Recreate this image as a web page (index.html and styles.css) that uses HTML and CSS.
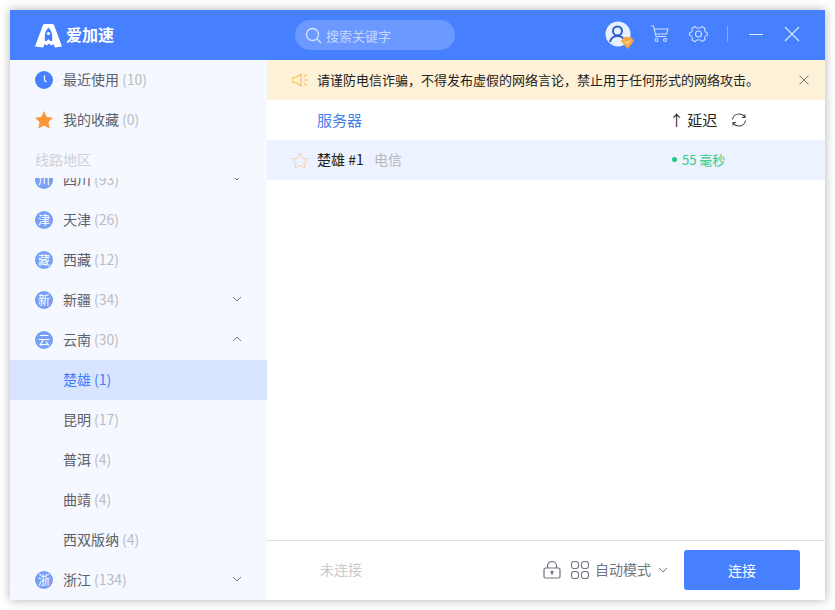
FILE: index.html
```html
<!DOCTYPE html>
<html lang="zh-CN">
<head>
    <meta charset="UTF-8">
    <title>爱加速</title>
    <link rel="stylesheet" href="styles.css">
</head>
<body>
    <div class="window">
        <header class="topbar">
            <div class="logo">
                <svg width="27" height="25" viewBox="0 0 27 25"><path fill="#fff" d="M9.500 1h8c.8 0 1.200.4 1.500 1l8 21.500-7 1-1.800-3.500-2 1.500-2.200-2-2.200 2-2-1.500L8 24.500l-8-1L8 2c.3-.6.700-1 1.500-1z"/><path fill="#4680ff" d="M13.500 4.500c-2.500 2.300-3.700 5.500-3.700 9V18h1.700l2-1.700 2 1.700h1.700v-4.500c0-3.500-1.200-6.700-3.700-9z"/><circle cx="13.500" cy="10.500" r="1.600" fill="#fff"/></svg>
                <span class="logo-text">爱加速</span>
            </div>
            <div class="search">
                <svg width="17" height="17" viewBox="0 0 17 17" fill="none" stroke="#d5e2ff" stroke-width="1.300"><circle cx="7.500" cy="7.500" r="6"/><path d="M12 12l4 4"/></svg>
                <span>搜索关键字</span>
            </div>
            <div class="top-actions">
                <div class="avatar">
                    <svg width="26" height="26" viewBox="0 0 26 26"><circle cx="13" cy="13" r="12.500" fill="#e8f0ff"/><circle cx="12.500" cy="10" r="4.500" fill="none" stroke="#2f5fc8" stroke-width="2"/><path d="M5 21c1-4 4-6 7.500-6s6.500 2 7.500 6" fill="none" stroke="#2f5fc8" stroke-width="2"/></svg>
                    <svg class="badge" width="13" height="13" viewBox="0 0 13 13"><path fill="#f5a742" d="M3 1h7l3 4-6.500 8L0 5z"/><path d="M4 5.500l2 2 3-3" fill="none" stroke="#fff"/></svg>
                </div>
                <svg class="cart" width="19" height="18" viewBox="0 0 19 18" fill="none" stroke="#cfdcfb" stroke-width="1.100"><path d="M1 1h2.500l2.500 10.500h10M4.200 4H18l-1.500 5H5.300"/><circle cx="6.500" cy="15" r="1.500"/><circle cx="15" cy="15" r="1.500"/></svg>
                <svg class="gear" width="19" height="18" viewBox="0 0 19 18" fill="none" stroke="#cfdcfb" stroke-width="1.100"><path d="M6 1.500c.5 1 2 1.800 3.500 1.800S12.500 2.500 13 1.500l3 1.800c-.5 1.200-.3 2.400.4 3.400.5.800 1.300 1.300 2.100 1.300v2c-.8 0-1.600.5-2.100 1.300-.7 1-.9 2.200-.4 3.400l-3 1.800c-.5-1-2-1.800-3.500-1.800S6.500 15.700 6 16.700l-3-1.800c.5-1.200.3-2.400-.4-3.400-.5-.8-1.300-1.300-2.100-1.300V8c.8 0 1.600-.5 2.100-1.300.7-1 .9-2.200.4-3.400z"/><circle cx="9.500" cy="9" r="3"/></svg>
                <span class="divider"></span>
                <span class="minimize"></span>
                <svg class="close" width="16" height="16" viewBox="0 0 16 16" stroke="#dbe6ff" stroke-width="1.100"><path d="M1 1l14 14M15 1L1 15"/></svg>
            </div>
        </header>
        <div class="body">
            <aside class="sidebar">
                <div class="side-row">
                    <span class="clock"><svg width="18" height="18" viewBox="0 0 18 18"><circle cx="9" cy="9" r="9" fill="#4680ff"/><path d="M9.500 4.500v5l2 1.500" fill="none" stroke="#fff" stroke-width="1.200"/></svg></span>
                    <span class="name">最近使用</span><span class="count">(10)</span>
                </div>
                <div class="side-row">
                    <span class="clock"><svg width="18" height="18" viewBox="0 0 18 18"><path fill="#fd9639" d="M9 0l2.800 5.900 6.200.8-4.500 4.400 1.100 6.400L9 14.400l-5.600 3.100 1.100-6.400L0 6.700l6.200-.8z"/></svg></span>
                    <span class="name">我的收藏</span><span class="count">(0)</span>
                </div>
                <div class="side-title">线路地区</div>
                <div class="region-list">
                    <div class="side-row first">
                        <span class="dot">川</span>
                        <span class="name">四川</span><span class="count">(93)</span>
                        <svg class="chev" width="10" height="6" viewBox="0 0 10 6" fill="none" stroke="#777"><path d="M1 1l4 4 4-4"/></svg>
                    </div>
                    <div class="side-row"><span class="dot">津</span><span class="name">天津</span><span class="count">(26)</span></div>
                    <div class="side-row"><span class="dot">藏</span><span class="name">西藏</span><span class="count">(12)</span></div>
                    <div class="side-row">
                        <span class="dot">新</span><span class="name">新疆</span><span class="count">(34)</span>
                        <svg class="chev" width="10" height="6" viewBox="0 0 10 6" fill="none" stroke="#777"><path d="M1 1l4 4 4-4"/></svg>
                    </div>
                    <div class="side-row">
                        <span class="dot">云</span><span class="name">云南</span><span class="count">(30)</span>
                        <svg class="chev" width="10" height="6" viewBox="0 0 10 6" fill="none" stroke="#777"><path d="M1 5l4-4 4 4"/></svg>
                    </div>
                    <div class="side-row sub active"><span class="name">楚雄</span><span class="count">(1)</span></div>
                    <div class="side-row sub"><span class="name">昆明</span><span class="count">(17)</span></div>
                    <div class="side-row sub"><span class="name">普洱</span><span class="count">(4)</span></div>
                    <div class="side-row sub"><span class="name">曲靖</span><span class="count">(4)</span></div>
                    <div class="side-row sub"><span class="name">西双版纳</span><span class="count">(4)</span></div>
                    <div class="side-row">
                        <span class="dot">浙</span><span class="name">浙江</span><span class="count">(134)</span>
                        <svg class="chev" width="10" height="6" viewBox="0 0 10 6" fill="none" stroke="#777"><path d="M1 1l4 4 4-4"/></svg>
                    </div>
                </div>
            </aside>
            <main class="content">
                <div class="notice">
                    <svg width="16" height="14" viewBox="0 0 16 14" fill="none" stroke="#f7c35f" stroke-width="1.100"><path d="M.5 4.500h3.500L9 1v12L4 9.500H.5zM12 3.500l3-2M12 7h3.500M12 10.500l3 2"/></svg>
                    <span class="notice-text">请谨防电信诈骗，不得发布虚假的网络言论，禁止用于任何形式的网络攻击。</span>
                    <svg class="notice-close" width="10" height="10" viewBox="0 0 10 10" stroke="#777"><path d="M.5.500l9 9M9.500.500l-9 9"/></svg>
                </div>
                <div class="list-head">
                    <span class="col-server">服务器</span>
                    <span class="col-delay">↑ 延迟</span>
                    <svg width="16" height="14" viewBox="0 0 16 14" fill="none" stroke="#444" stroke-width="1.100"><path d="M1.500 6.500C2 3 5 1 8 1c2.500 0 4.500 1 5.500 3M14.500 7.500C14 11 11 13 8 13c-2.500 0-4.500-1-5.500-3M11 4.500h3V1.500M5 9.500H2v3"/></svg>
                </div>
                <div class="server-row">
                    <svg width="18" height="17" viewBox="0 0 18 17" fill="none" stroke="#f3cfae"><path d="M9 1l2.400 5.100 5.600.7-4.100 3.800 1.100 5.500L9 13.400l-5 2.700 1.100-5.500L1 6.800l5.600-.7z"/></svg>
                    <span class="server-name">楚雄 #1</span>
                    <span class="server-isp">电信</span>
                    <span class="server-ping"><i class="ping-dot"></i>55 毫秒</span>
                </div>
                <div class="spacer"></div>
                <footer class="bottom">
                    <span class="status">未连接</span>
                    <svg class="lock" width="18" height="18" viewBox="0 0 18 18" fill="none" stroke="#6f7480" stroke-width="1.200"><rect x="1" y="7" width="16" height="10" rx="1.500"/><path d="M4.500 7V5a4.500 4.500 0 0 1 9 0v2"/><circle cx="9" cy="11" r="1" fill="#6f7480"/><path d="M9 11v3"/></svg>
                    <svg class="grid" width="18" height="18" viewBox="0 0 18 18" fill="none" stroke="#6f7480" stroke-width="1.100"><rect x=".5" y=".5" width="7" height="7" rx="2.500"/><rect x="10.500" y=".5" width="7" height="7" rx="2.500"/><rect x=".5" y="10.500" width="7" height="7" rx="2.500"/><rect x="10.500" y="10.500" width="7" height="7" rx="2.500"/></svg>
                    <span class="mode">自动模式</span>
                    <svg class="mode-chev" width="10" height="6" viewBox="0 0 10 6" fill="none" stroke="#777"><path d="M1 1l4 4 4-4"/></svg>
                    <button class="connect">连接</button>
                </footer>
            </main>
        </div>
    </div>
</body>
</html>
```
FILE: styles.css
```css
* {
    box-sizing: border-box;
}
html, body {
    height: 100%;
}
body {
    margin: 0;
    padding: 10px;
    background: #fff;
    font-family: "Noto Sans CJK SC", "Noto Sans", sans-serif;
    font-size: 14px;
    overflow: hidden;
}
.window {
    width: 815px;
    height: 590px;
    display: flex;
    flex-direction: column;
    background: #fff;
    box-shadow: 0 0 10px rgba(0, 0, 0, 0.3);
}
.topbar {
    height: 50px;
    flex: none;
    background: #4680ff;
    display: flex;
    align-items: center;
}
.logo {
    width: 285px;
    padding-left: 25px;
    display: flex;
    align-items: center;
    gap: 4px;
}
.logo-text {
    color: #fff;
    font-size: 16px;
    font-weight: 700;
    line-height: 20px;
    margin-bottom: 2px;
}
.search {
    width: 160px;
    height: 30px;
    border-radius: 15px;
    background: #6b99ff;
    color: #c5d6ff;
    display: flex;
    align-items: center;
    gap: 4px;
    padding-left: 10px;
    font-size: 13px;
}
.top-actions {
    margin-left: auto;
    display: flex;
    align-items: center;
    margin-bottom: 2px;
}
.avatar {
    position: relative;
    width: 26px;
    height: 26px;
    margin-right: 19px;
}
.badge {
    position: absolute;
    right: -3px;
    bottom: -2px;
}
.cart {
    margin-right: 20px;
}
.gear {
    margin-right: 19px;
}
.divider {
    width: 1px;
    height: 16px;
    background: #82a8ff;
    margin-right: 21px;
}
.minimize {
    width: 14px;
    height: 1px;
    background: #dbe6ff;
    margin-right: 21px;
}
.close {
    margin-right: 25px;
}
.body {
    flex: 1;
    display: flex;
    min-height: 0;
}
.sidebar {
    width: 257px;
    flex: none;
    background: #f5f8ff;
    display: flex;
    flex-direction: column;
    overflow: hidden;
}
.side-row {
    height: 40px;
    flex: none;
    display: flex;
    align-items: center;
    padding: 0 25px;
    color: #5c6068;
    font-size: 14px;
    white-space: pre;
}
.side-row .name, .side-row .count {
    margin-bottom: 2px;
}
.clock {
    width: 18px;
    height: 18px;
    margin-right: 10px;
    display: flex;
}
.count {
    color: #b9bcc2;
    margin-left: 3px;
}
.side-title {
    height: 38px;
    flex: none;
    padding-left: 25px;
    line-height: 38px;
    color: #cfd1d5;
}
.region-list {
    flex: 1;
    overflow: hidden;
}
.first {
    margin-top: -18px;
}
.first .chev {
    margin-bottom: 5px;
}
.dot {
    width: 18px;
    height: 18px;
    border-radius: 50%;
    background: #779ff5;
    color: #fff;
    font-size: 12px;
    line-height: 18px;
    text-align: center;
    margin-right: 10px;
    flex: none;
}
.chev {
    margin-left: auto;
    margin-bottom: 3px;
}
.sub {
    padding-left: 53px;
}
.active {
    background: #d9e5ff;
}
.active .name, .active .count {
    color: #4680ff;
}
.content {
    flex: 1;
    display: flex;
    flex-direction: column;
    min-width: 0;
}
.notice {
    height: 40px;
    flex: none;
    background: #fdf1d8;
    display: flex;
    align-items: center;
    padding: 0 16px 0 25px;
}
.notice-text {
    margin-left: 9px;
    margin-bottom: 2px;
    color: #222;
    font-size: 13px;
}
.notice-close {
    margin-left: auto;
}
.list-head {
    height: 40px;
    flex: none;
    display: flex;
    align-items: center;
    padding-left: 50px;
}
.col-server {
    width: 352px;
    color: #4680e8;
    font-size: 15px;
    margin-bottom: 2px;
}
.col-delay {
    width: 62px;
    color: #222;
    font-size: 15px;
    margin-bottom: 2px;
}
.server-row {
    height: 40px;
    flex: none;
    background: #ecf2ff;
    display: flex;
    align-items: center;
    padding-left: 24px;
}
.server-name {
    margin-left: 8px;
    width: 57px;
    color: #222;
    font-size: 14px;
    margin-bottom: 2px;
}
.server-isp {
    color: #b4b7bd;
    font-size: 14px;
    width: 298px;
    margin-bottom: 2px;
}
.server-ping {
    color: #2fcf8a;
    font-size: 13px;
    display: flex;
    align-items: center;
    margin-bottom: 2px;
}
.ping-dot {
    width: 5px;
    height: 5px;
    border-radius: 50%;
    background: #1fcb80;
    margin-right: 5px;
}
.spacer {
    flex: 1;
}
.bottom {
    height: 60px;
    flex: none;
    border-top: 1px solid #e2e2e2;
    display: flex;
    align-items: center;
    padding: 0 25px 1px 53px;
}
.status {
    color: #c8cacd;
    font-size: 14px;
    margin-bottom: 2px;
}
.lock {
    margin-left: auto;
    margin-right: 10px;
}
.grid {
    margin-right: 6px;
}
.mode {
    color: #6f7480;
    font-size: 14px;
    margin-right: 7px;
    margin-bottom: 2px;
}
.mode-chev {
    margin-right: 16px;
}
.connect {
    width: 116px;
    height: 40px;
    border: none;
    border-radius: 3px;
    background: #4680ff;
    color: #fff;
    font-family: inherit;
    font-size: 14px;
}
```
